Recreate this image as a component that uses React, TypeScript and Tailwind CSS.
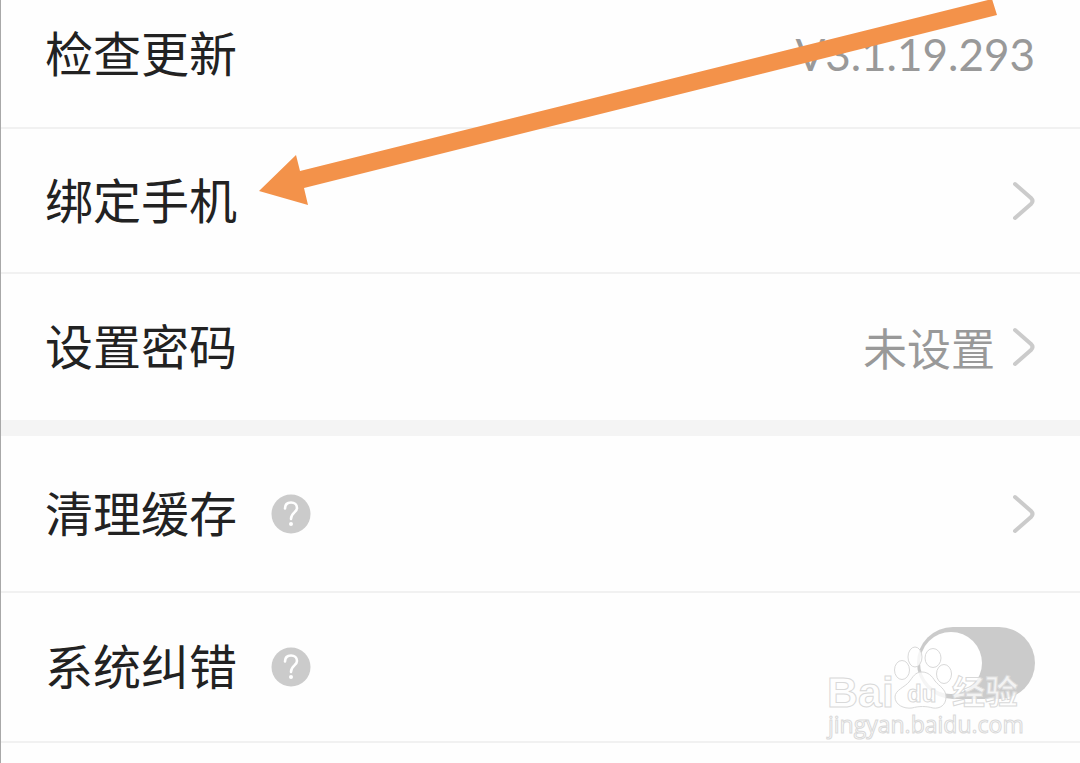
import type { ReactNode } from "react";

const ROW = "flex w-full items-center justify-between pl-11 pr-[45px] text-left";
const DIVIDER = "border-b-2 border-[#f1f1f1]";

function Label({ children }: { children: ReactNode }) {
  return <span className="block pb-1.5 text-5xl leading-[60px] text-[#222]">{children}</span>;
}

function Chevron() {
  return (
    <svg
      className="h-10 w-6"
      viewBox="0 0 24 40"
      fill="none"
      stroke="#cbcbcb"
      strokeWidth="4"
      strokeLinecap="round"
      strokeLinejoin="round"
    >
      <path d="M4 3 L20 17 Q23 20 20 23 L4 37" />
    </svg>
  );
}

function Help({ label }: { label: string }) {
  return (
    <button type="button" aria-label={label} className="size-10">
      <svg viewBox="0 0 40 40" fill="none">
        <circle cx="20" cy="20" r="19.5" fill="#cbcbcb" />
        <path
          d="M14 14.5C14 10.5 16.5 8.5 20 8.5C23.5 8.5 26 10.8 26 14C26 18.5 20 18.5 20 25"
          stroke="#fff"
          strokeWidth="2.6"
          strokeLinecap="round"
        />
        <circle cx="20" cy="30" r="2" fill="#fff" />
      </svg>
    </button>
  );
}

function Arrow() {
  return (
    <svg
      className="pointer-events-none absolute left-[258px] top-0"
      width="740"
      height="206"
      viewBox="0 0 740 206"
      fill="#f3924a"
    >
      <path d="M0 191 L37 155 L41 171 L733 -1 L738 15 L45 188 L49 205 Z" />
    </svg>
  );
}

function Watermark() {
  return (
    <svg
      className="pointer-events-none absolute bottom-0 right-[51px]"
      width="204"
      height="107"
      viewBox="0 0 204 107"
      fill="#fff"
      fillOpacity="0.8"
      stroke="#d9d9d9"
      strokeWidth="1"
    >
      <text x="2" y="73" fontSize="43" className="font-['Liberation_Sans'] font-bold">
        Bai
      </text>
      <ellipse cx="77" cy="36" rx="7.5" ry="9.5" />
      <ellipse cx="90" cy="23" rx="7" ry="10" />
      <ellipse cx="108" cy="24" rx="8" ry="9.5" />
      <ellipse cx="119" cy="40" rx="7.5" ry="9.5" />
      <path d="M97 38C103 38 107 42 110 47C114 52 121 55 121 63C121 71 115 75 108 74C101 72 94 72 87 74C79 75 70 71 70 63C70 56 80 53 84 48C88 43 90 38 97 38Z" />
      <text x="82" y="68" fontSize="24" className="font-['Liberation_Sans'] font-bold">
        du
      </text>
      <text x="127" y="70" fontSize="33" className="font-['Noto_Sans_CJK_SC'] font-bold">
        经验
      </text>
      <text x="3" y="99" fontSize="23" className="font-['Open_Sans']">
        jingyan.baidu.com
      </text>
    </svg>
  );
}

export default function App() {
  return (
    <main className="relative min-h-screen overflow-hidden border-l border-[#a8a8a8] bg-[#fefefe] font-['Noto_Sans_CJK_SC',sans-serif]">
      <div className={`${ROW} ${DIVIDER} h-[129px] pb-5`}>
        <Label>检查更新</Label>
        <span className="font-['Lato'] text-[44px] leading-[60px] text-[#999]">V3.1.19.293</span>
      </div>
      <button type="button" className={`${ROW} ${DIVIDER} h-[145px]`}>
        <Label>绑定手机</Label>
        <Chevron />
      </button>
      <button type="button" className={`${ROW} h-[146px]`}>
        <Label>设置密码</Label>
        <span className="flex items-center gap-4">
          <span className="text-[44px] leading-[60px] text-[#999]">未设置</span>
          <Chevron />
        </span>
      </button>

      <div className="h-4 bg-[#f4f4f4]" />

      <div className={`${ROW} ${DIVIDER} h-[157px]`}>
        <div className="flex items-center gap-[34px]">
          <Label>清理缓存</Label>
          <Help label="清理缓存说明" />
        </div>
        <button type="button" aria-label="清理缓存">
          <Chevron />
        </button>
      </div>
      <div className={`${ROW} ${DIVIDER} relative h-[150px]`}>
        <div className="flex items-center gap-[34px]">
          <label htmlFor="correction">
            <Label>系统纠错</Label>
          </label>
          <Help label="系统纠错说明" />
        </div>
        <input
          id="correction"
          type="checkbox"
          role="switch"
          className="mb-2 flex h-[72px] w-[118px] appearance-none items-center rounded-full bg-[#cbcbcb] px-[3px] before:size-[62px] before:rounded-full before:bg-white before:content-[''] checked:justify-end checked:bg-green-500"
        />
        <Watermark />
      </div>

      <Arrow />
    </main>
  );
}
